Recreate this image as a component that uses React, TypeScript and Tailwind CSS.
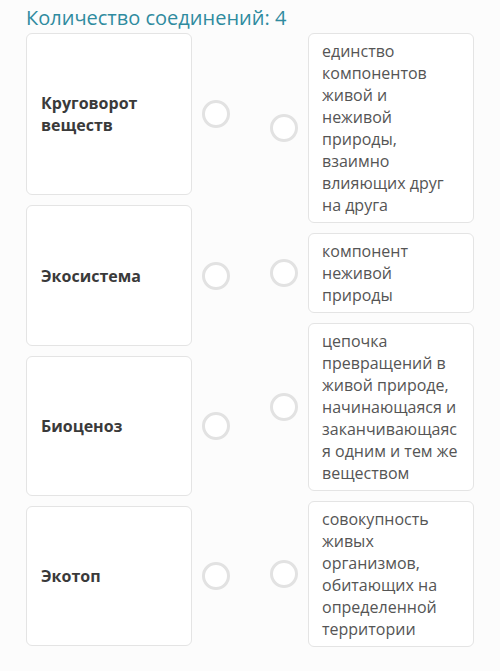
const font = { fontFamily: '"Open Sans", "Noto Sans", sans-serif' };

const leftItems = [
  { lines: ["Круговорот", "веществ"], h: "h-[162px]" },
  { lines: ["Экосистема"], h: "h-[141px]" },
  { lines: ["Биоценоз"], h: "h-[140px]" },
  { lines: ["Экотоп"], h: "h-[140px]" },
];

const rightItems = [
  ["единство", "компонентов", "живой и", "неживой", "природы,", "взаимно", "влияющих друг", "на друга"],
  ["компонент", "неживой", "природы"],
  ["цепочка", "превращений в", "живой природе,", "начинающаяся и", "заканчивающаяс", "я одним и тем же", "веществом"],
  ["совокупность", "живых", "организмов,", "обитающих на", "определенной", "территории"],
];

function Circle() {
  return <div className="w-[28px] h-[28px] rounded-full border-[3px] border-[#e2e2e2] bg-white" />;
}

export default function App() {
  return (
    <div className="w-[500px] h-[671px] bg-[#fcfcfc] px-[26px] pt-[4px]" style={font}>
      <h1 className="text-[20px] leading-[28px] text-[#2f8b9f] font-normal">
        Количество соединений: 4
      </h1>
      <div className="mt-[1px] flex gap-[19px]">
        <div className="flex flex-col gap-[10px] w-[214px]">
          {leftItems.map((item, i) => (
            <div key={i} className="flex items-center">
              <div
                className={`w-[166px] ${item.h} bg-white border border-[#e4e4e4] rounded-[6px] flex flex-col justify-center pl-[14px] text-[16px] leading-[22px] font-bold text-[#3a3a3a]`}
              >
                {item.lines.map((l, j) => (
                  <span key={j}>{l}</span>
                ))}
              </div>
              <div className="flex-1 flex justify-center">
                <Circle />
              </div>
            </div>
          ))}
        </div>
        <div className="flex flex-col gap-[10px] w-[215px]">
          {rightItems.map((lines, i) => (
            <div key={i} className="flex items-center">
              <div className="flex-1 flex justify-center">
                <Circle />
              </div>
              <div className="w-[166px] bg-white border border-[#e4e4e4] rounded-[6px] py-[6px] pl-[13px] flex flex-col text-[16px] leading-[22px] text-[#555555] whitespace-nowrap">
                {lines.map((l, j) => (
                  <span key={j}>{l}</span>
                ))}
              </div>
            </div>
          ))}
        </div>
      </div>
    </div>
  );
}
